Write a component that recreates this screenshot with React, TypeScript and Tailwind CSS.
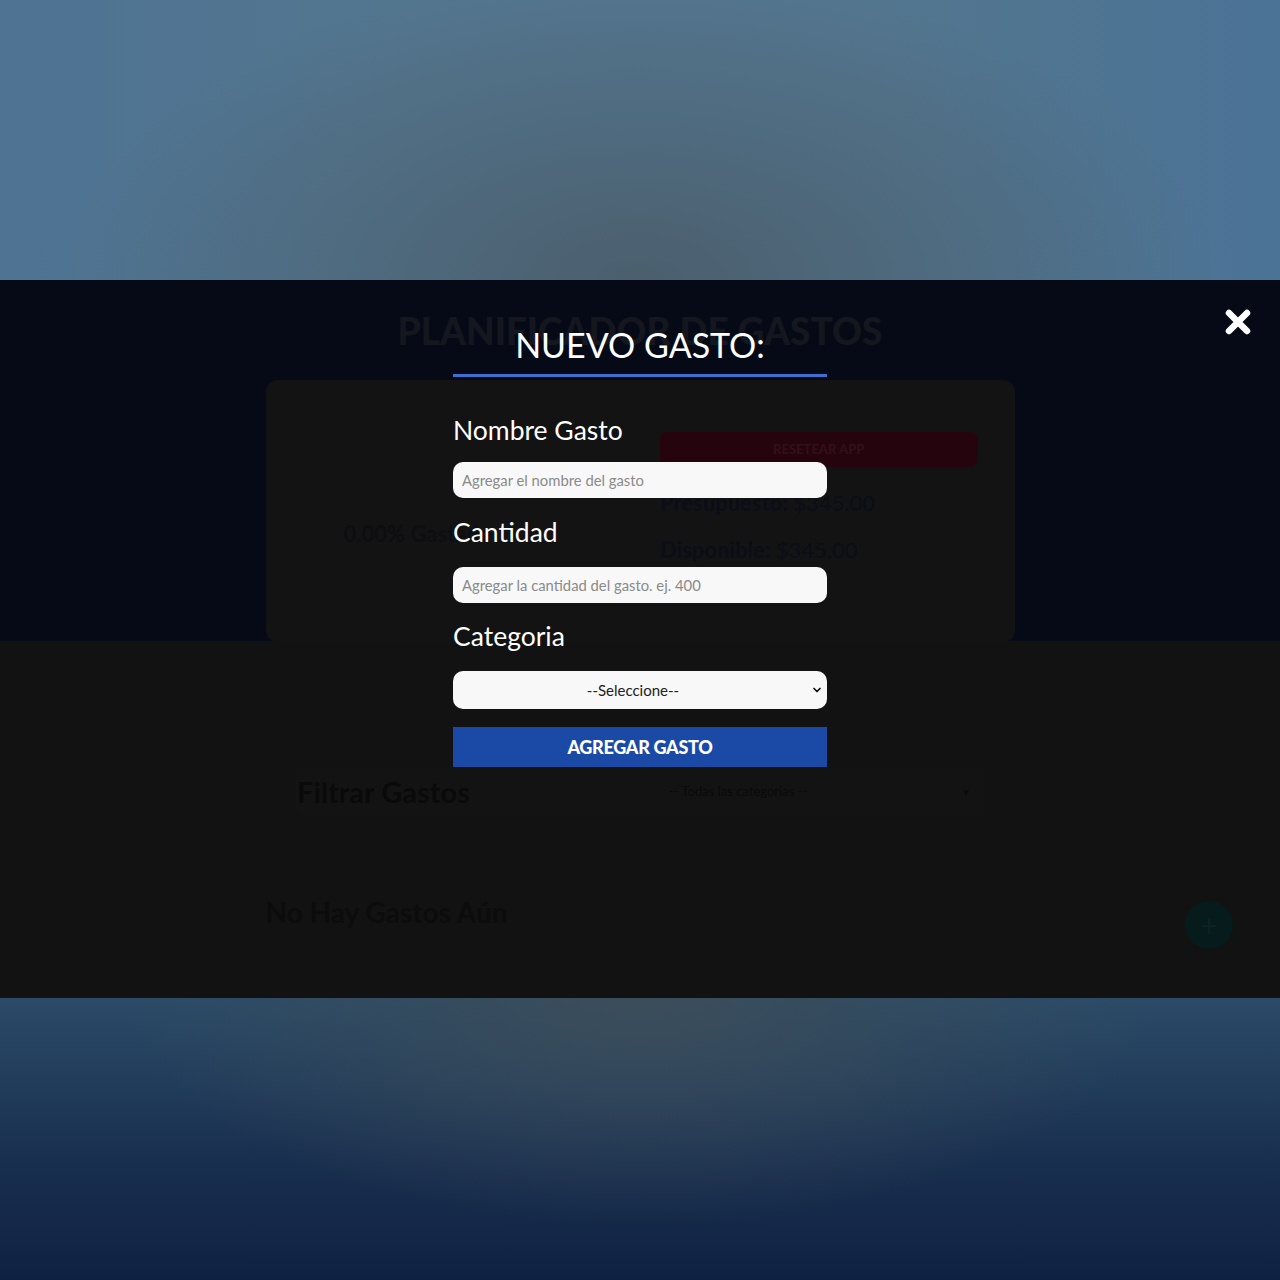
import { ChevronDown } from 'lucide-react';

const lato = { fontFamily: 'Lato, "Open Sans", sans-serif' };

function BackgroundApp() {
  return (
    <div className="flex h-full flex-col">
      <div className="h-[361px] shrink-0 bg-[#060a17] pt-[32px]">
        <h1 className="text-center text-[37px] font-black uppercase leading-none text-[#15171f]">
          Planificador de Gastos
        </h1>
      </div>

      <div className="mx-auto -mt-[261px] grid h-[262px] w-[749px] grid-cols-2 rounded-xl bg-[#131313]">
        <div className="flex items-start pl-[78px] pt-[137px]">
          <span className="text-[22px] font-bold text-[#0d0d12]">0.00% Gastado</span>
        </div>
        <div className="flex flex-col pl-[20px] pr-[37px] pt-[52px]">
          <div className="flex h-[35px] items-center justify-center rounded-lg bg-[#25040d] text-[13px] font-black uppercase text-[#32101a]">
            Resetear App
          </div>
          <p className="mt-[19px] text-[22px] font-bold text-[#0b0d17]">
            Presupuesto: <span className="font-normal">$345.00</span>
          </p>
          <p className="mt-[14px] text-[22px] font-bold text-[#0b0d17]">
            Disponible: <span className="font-normal">$345.00</span>
          </p>
        </div>
      </div>

      <div className="mx-auto mt-[126px] flex h-[48px] w-[690px] items-center justify-between rounded-lg bg-[#131313] pl-[2px]">
        <span className="text-[29px] font-bold text-[#0a0a0a]">Filtrar Gastos</span>
        <div className="flex w-[316px] items-center justify-between pr-[14px] text-[13px] text-[#0a0a0a]">
          <span>-- Todas las categorias --</span>
          <span className="text-[10px]">▼</span>
        </div>
      </div>

      <div className="mx-auto mt-[75px] flex w-[749px] items-center justify-between">
        <span className="text-[28px] font-bold text-[#0c0c0c]">No Hay Gastos Aún</span>
      </div>
    </div>
  );
}

function Modal() {
  return (
    <div className="absolute inset-0 flex flex-col items-center">
      <button className="absolute right-[28px] top-[28px] text-white">
        <svg width="28" height="28" viewBox="0 0 28 28">
          <path d="M5 5 L23 23 M23 5 L5 23" stroke="white" strokeWidth="6.5" strokeLinecap="round" />
        </svg>
      </button>

      <h2 className="mt-[48px] text-[34px] leading-none text-white">NUEVO GASTO:</h2>
      <div className="mt-[12px] h-[2.5px] w-[374px] bg-[#3d6fd0]" />

      <form className="flex w-[374px] flex-col">
        <label className="mt-[40px] text-[26.5px] leading-none text-white">Nombre Gasto</label>
        <input
          className="mt-[19px] h-[36px] rounded-[10px] bg-[#f8f8f8] px-[9px] text-[14.8px] text-[#333] placeholder-[#8a8a8a] outline-none"
          placeholder="Agregar el nombre del gasto"
        />

        <label className="mt-[21px] text-[26.5px] leading-none text-white">Cantidad</label>
        <input
          className="mt-[21px] h-[36px] rounded-[10px] bg-[#f8f8f8] px-[9px] text-[14.8px] text-[#333] placeholder-[#8a8a8a] outline-none"
          placeholder="Agregar la cantidad del gasto. ej. 400"
        />

        <label className="mt-[20px] text-[26.5px] leading-none text-white">Categoria</label>
        <div className="relative mt-[22px]">
          <select className="h-[38px] w-full appearance-none rounded-[10px] bg-[#f8f8f8] pr-[14px] text-center text-[15px] text-[#222] outline-none">
            <option>--Seleccione--</option>
          </select>
          <ChevronDown
            className="pointer-events-none absolute right-[4px] top-[13px] text-[#111]"
            size={12}
            strokeWidth={3.5}
          />
        </div>

        <button
          type="button"
          className="mt-[18px] h-[40px] bg-[#1a4aa6] text-[18px] font-black uppercase tracking-[-0.3px] text-white"
        >
          Agregar Gasto
        </button>
      </form>
    </div>
  );
}

export default function App() {
  return (
    <div className="flex h-[1280px] w-[1280px] flex-col overflow-hidden" style={lato}>
      <div className="h-[280px] shrink-0 bg-[radial-gradient(ellipse_45%_110%_at_50%_100%,#4b5f6e,transparent),linear-gradient(90deg,#4e7393,#53768f_30%,#53768f_70%,#4b7396)]" />

      <div className="relative h-[718px] shrink-0 overflow-hidden bg-[#121212]">
        <BackgroundApp />
        <div className="absolute left-[1185px] top-[621px] flex size-[48px] items-center justify-center rounded-full bg-[#061b1c] text-[30px] leading-none text-[#0a2426]">
          +
        </div>
        <Modal />
      </div>

      <div className="h-[282px] shrink-0 bg-[radial-gradient(ellipse_40%_80%_at_50%_0%,#3b4d5a,transparent),linear-gradient(180deg,#2b4b68,#1a3050_55%,#0f2142)]" />
    </div>
  );
}
